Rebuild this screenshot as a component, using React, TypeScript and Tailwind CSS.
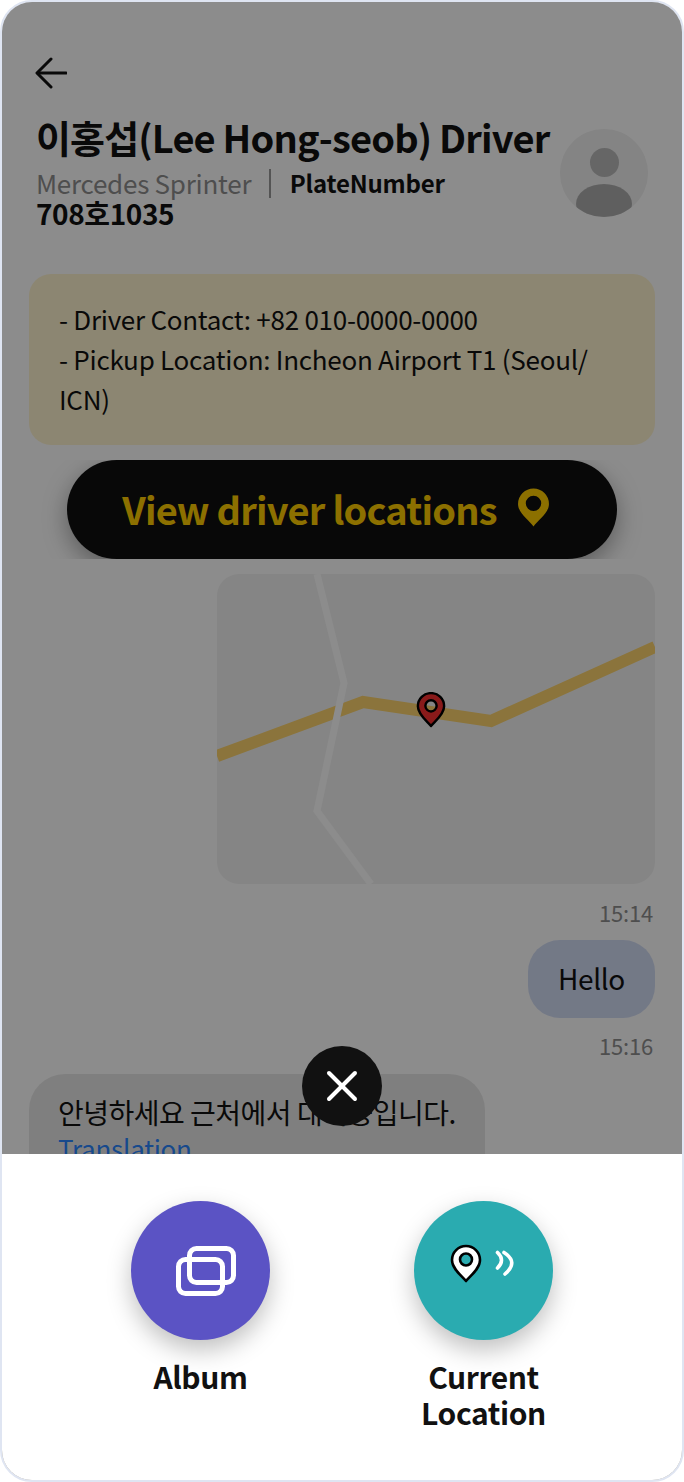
const font = { fontFamily: '"Noto Sans CJK KR", "Noto Sans", sans-serif' };

const pinPath =
  "M16 36 C12 31 2 24 2 15 A14 14 0 0 1 30 15 C30 24 20 31 16 36 Z M16 8.5 A6 6 0 1 0 16 20.5 A6 6 0 1 0 16 8.5 Z";

const PinIcon = ({ className, fill }: { className: string; fill: string }) => (
  <svg viewBox="0 0 32 38" className={className}>
    <path d={pinPath} fill={fill} fillRule="evenodd" stroke="#000" strokeWidth="2.6" strokeLinejoin="round" />
  </svg>
);

const App = () => {
  return (
    <div
      style={font}
      className="relative h-[1482px] w-[684px] overflow-hidden rounded-[32px] border-2 border-[#dfe5f2] bg-white text-[#111]"
    >
      {/* PAGE UNDER THE DIM */}
      <div className="px-[27px]">
        <div className="pl-[6px] pt-[55px]">
          <svg viewBox="0 0 32 32" className="h-[32px] w-[32px]" fill="none" stroke="#111" strokeWidth="3" strokeLinecap="round" strokeLinejoin="round">
            <path d="M31 16 H3" />
            <path d="M16 2 L2 16 L16 30" />
          </svg>
        </div>

        <div className="mt-[22px] flex items-start justify-between pl-[7px] pr-[7px]">
          <div className="w-[520px]">
            <h1 className="text-[38px] leading-[52px] font-bold tracking-[-0.85px] whitespace-nowrap">이홍섭(Lee Hong-seob) Driver</h1>
            <div className="mt-[5px] flex items-center text-[26px] leading-[30px] tracking-[-0.25px] text-[#8f8f8f]">
              <span>Mercedes Sprinter</span>
              <span className="ml-[18px] mr-[19px] h-[29px] w-[1.5px] bg-[#999]" />
              <span className="text-[24px] font-bold tracking-[-0.2px] text-[#111]">PlateNumber</span>
            </div>
            <p className="mt-[1px] text-[28px] leading-[28px] font-bold tracking-[-0.4px]">708호1035</p>
          </div>
          <div className="mt-[18px] flex h-[88px] w-[88px] shrink-0 flex-col items-center overflow-hidden rounded-full bg-[#f0f0f0] pt-[19px]">
            <div className="h-[29px] w-[29px] shrink-0 rounded-full bg-[#bababa]" />
            <div className="mt-[7px] h-[40px] w-[56px] shrink-0 rounded-[50%] bg-[#aeaeae]" />
          </div>
        </div>

        <div className="mt-[47px] rounded-[22px] bg-[#fff4d0] px-[30px] pb-[26px] pt-[25px] text-[26px] leading-[40px] tracking-[-0.26px]">
          <p>- Driver Contact: +82 010-0000-0000</p>
          <p>- Pickup Location: Incheon Airport T1 (Seoul/ ICN)</p>
        </div>
      </div>

      <div className="mt-[15px] h-[99px] overflow-hidden px-[65px]">
        <button className="flex h-[99px] w-[550px] items-center justify-center gap-[20px] rounded-full bg-[#0f0f0f] pr-[12px] text-[38px] font-bold tracking-[-0.8px] text-[#ffcc00] shadow-[0_8px_24px_rgba(0,0,0,0.35)]">
          <span className="-mt-[3px]">View driver locations</span>
          <svg viewBox="0 0 32 38" className="-mt-[4px] h-[40px] w-[33px]">
            <path
              fillRule="evenodd"
              d="M16 37 C12 31 1 24 1 15 A15 15 0 0 1 31 15 C31 24 20 31 16 37 Z M16 7 A7.5 7.5 0 1 0 16 22 A7.5 7.5 0 1 0 16 7 Z"
              fill="#ffcc00"
            />
          </svg>
        </button>
      </div>

      <div className="px-[27px]">
        <div className="ml-[188px] mt-[15px] h-[310px] w-[438px] overflow-hidden rounded-[22px] bg-[#f3f3f3]">
          <div className="relative h-full w-full">
            <svg viewBox="0 0 438 310" className="h-full w-full" fill="none">
              <path d="M0 182 L146 128 L274 147 L438 73" stroke="#fdd46e" strokeWidth="12" />
              <path d="M100 0 L127 109 L100 237 L154 310" stroke="#ffffff" strokeWidth="7" />
            </svg>
            <PinIcon className="absolute left-[199px] top-[118px] h-[36px] w-[30px]" fill="#f93030" />
          </div>
        </div>

        <p className="mt-[15px] pr-[2px] text-right text-[22px] leading-[26px] tracking-[-0.2px] text-[#8f8f8f]">15:14</p>
        <div className="mt-[15px] flex justify-end">
          <div className="flex h-[78px] w-[127px] items-center justify-center rounded-[32px] bg-[#d2dcf5] pb-[2px] text-[28px] tracking-[-0.4px]">Hello</div>
        </div>
        <p className="mt-[14px] pr-[2px] text-right text-[22px] leading-[26px] tracking-[-0.2px] text-[#8f8f8f]">15:16</p>

        <div className="mt-[16px] h-[140px] w-[456px] rounded-[36px] bg-[#e8e8e8] px-[29px] pt-[20px] text-[28px] leading-[36px] tracking-[-0.5px]">
          <p className="whitespace-nowrap">안녕하세요 근처에서 대기중입니다.</p>
          <p className="text-[26px] tracking-[-0.25px] text-[#2a86ff]">Translation</p>
        </div>
      </div>

      {/* DIM */}
      <div className="absolute inset-0 bg-black/45" />

      {/* CLOSE */}
      <button className="absolute left-[300px] top-[1044px] flex h-[80px] w-[80px] items-center justify-center rounded-full bg-[#111]">
        <svg viewBox="0 0 32 32" className="h-[32px] w-[32px]" stroke="#fff" strokeWidth="4" strokeLinecap="round">
          <path d="M3 3 L29 29" />
          <path d="M29 3 L3 29" />
        </svg>
      </button>

      {/* BOTTOM SHEET */}
      <div className="absolute inset-x-0 bottom-0 top-[1152px] bg-white">
        <div className="flex pl-[129px] pt-[47px]">
          <div className="flex w-[139px] flex-col items-center">
            <div className="flex h-[139px] w-[139px] items-center justify-center rounded-full bg-[#5b53c4] shadow-[0_10px_24px_rgba(0,0,0,0.25)]">
              <svg viewBox="0 0 60 50" className="h-[50px] w-[60px] translate-x-[5px]" fill="none" stroke="#fff" strokeWidth="5">
                <rect x="13.5" y="2.5" width="44" height="34" rx="7" />
                <rect x="2.5" y="13.5" width="44" height="34" rx="7" />
              </svg>
            </div>
            <p className="mt-[18px] text-[30px] leading-[36px] font-bold tracking-[-0.4px]">Album</p>
          </div>
          <div className="ml-[144px] flex w-[139px] flex-col items-center">
            <div className="relative flex h-[139px] w-[139px] items-center justify-center rounded-full bg-[#2aabb0] shadow-[0_10px_24px_rgba(0,0,0,0.25)]">
              <PinIcon className="absolute left-[36px] top-[43px] h-[40px] w-[32px]" fill="#fff" />
              <svg viewBox="0 0 20 26" className="absolute left-[81px] top-[49px] h-[26px] w-[20px]" fill="none" stroke="#fff" strokeWidth="3.6" strokeLinecap="round" strokeLinejoin="round">
                <path d="M2.5 2.5 Q10.5 10 2.5 18" />
                <path d="M9 2.5 Q24 12 10 24" />
              </svg>
            </div>
            <p className="mt-[18px] w-[139px] text-center text-[30px] leading-[36px] font-bold tracking-[-0.4px]">Current Location</p>
          </div>
        </div>
      </div>
    </div>
  );
};

export default App;
